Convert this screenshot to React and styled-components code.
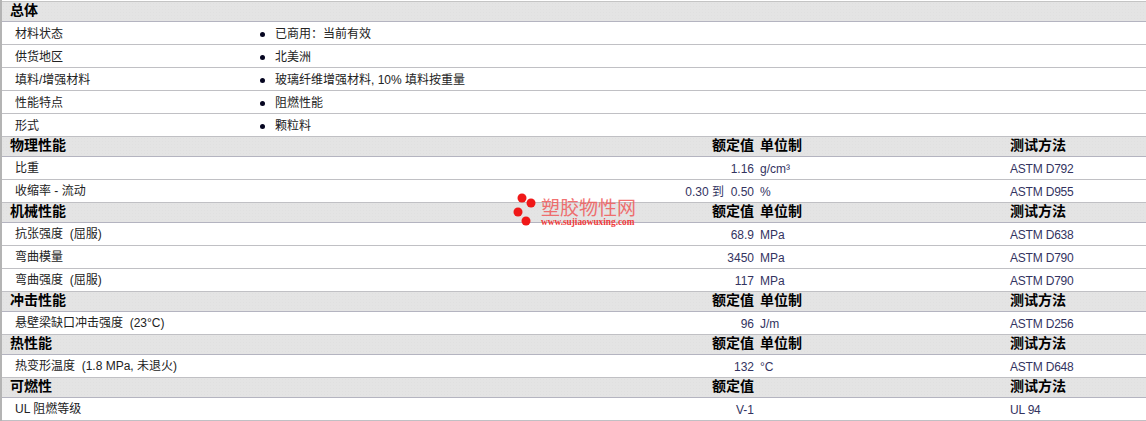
import React from "react";
import styled, { createGlobalStyle } from "styled-components";

const Global = createGlobalStyle`
  html, body { margin: 0; padding: 0; background: #fff; }
  body { font-family: "Liberation Sans", "Noto Sans CJK SC", sans-serif; font-size: 12px; color: #1a1a1a; }
`;
const Page = styled.div`
  position: relative;
  width: 1146px;
  height: 421px;
  overflow: hidden;
  box-sizing: border-box;
  padding-top: 1px;
  border-left: 2px solid #b4b4b4;
`;
const TopRule = styled.div`
  height: 1px;
  background: #c4c4c4;
`;
const Head = styled.div`
  display: grid;
  grid-template-columns: 8px 744px 6px 250px 1fr;
  align-items: start;
  height: 19px;
  border-bottom: 1px solid #b4b4c0;
  background-color: #e4e4e4;
  background-image: radial-gradient(#e0e0e0 0.5px, transparent 0.6px);
  background-size: 3px 3px;
  font-weight: bold;
  font-size: 14px;
  color: #000;
  line-height: 16px;
`;
const Row = styled.div`
  display: grid;
  grid-template-columns: 13px 739px 6px 250px 1fr;
  align-items: center;
  height: 22px;
  border-bottom: 1px solid #c0c0c4;
  line-height: 24px;
  color: #222;
`;
const InfoRow = styled.div`
  display: grid;
  grid-template-columns: 13px 245px 15px 1fr;
  align-items: center;
  height: 22px;
  border-bottom: 1px solid #c0c0c4;
  line-height: 24px;
  color: #222;
`;
const Cell = styled.span`
  white-space: pre;
  grid-column: ${(p) => p.$col};
  color: ${(p) => (p.$tone ? "#33335f" : "inherit")};
`;
const TestCell = styled(Cell)`
  letter-spacing: -0.2px;
`;
const Split = styled.span`
  grid-column: 2;
  display: flex;
  justify-content: space-between;
  white-space: pre;
`;
const Label = styled.span`
  line-height: 22px;
`;
const Value = styled.span`
  color: #33335f;
`;
const Bullet = styled.span`
  grid-column: 3;
  width: 5px;
  height: 5px;
  border-radius: 50%;
  background: #050520;
`;
const Mark = styled.div`
  position: absolute;
  left: 508px;
  top: 192px;
  width: 130px;
  height: 38px;
  pointer-events: none;
  display: flex;
  gap: 4px;
`;
const MarkIcon = styled.svg`
  width: 27px;
  height: 34px;
  flex: none;
`;
const MarkText = styled.div`
  display: flex;
  flex-direction: column;
  color: #f05a5a;
`;
const MarkTitle = styled.div`
  font-size: 19px;
  line-height: 19px;
  margin-top: 7px;
  opacity: .85;
`;
const MarkUrl = styled.div`
  font-family: "Liberation Serif", serif;
  font-size: 9.3px;
  font-weight: bold;
  line-height: 8px;
  color: #f03c3c;
  white-space: nowrap;
`;

const Section = ({ title, unit = "单位制", rows = [] }) => (
  <>
    <Head>
      <Split>
        <span>{title}</span>
        <span>额定值</span>
      </Split>
      {unit && <Cell $col={4}>{unit}</Cell>}
      <Cell $col={5}>测试方法</Cell>
    </Head>
    {rows.map((r) => (
      <Row key={r[0]}>
        <Split>
          <Label>{r[0]}</Label>
          <Value>{r[1]}</Value>
        </Split>
        <Cell $col={4} $tone>{r[2]}</Cell>
        <TestCell $col={5} $tone>{r[3]}</TestCell>
      </Row>
    ))}
  </>
);

const info = [
  ["材料状态", "已商用：当前有效"],
  ["供货地区", "北美洲"],
  ["填料/增强材料", "玻璃纤维增强材料, 10% 填料按重量"],
  ["性能特点", "阻燃性能"],
  ["形式", "颗粒料"],
];

export default function App() {
  return (
    <Page>
      <Global />
      <TopRule />
      <Head>
        <Split><span>总体</span></Split>
      </Head>
      {info.map(([k, v]) => (
        <InfoRow key={k}>
          <Cell $col={2}>{k}</Cell>
          <Bullet />
          <Cell $col={4}>{v}</Cell>
        </InfoRow>
      ))}
      <Section title="物理性能" rows={[
        ["比重", "1.16", "g/cm³", "ASTM D792"],
        ["收缩率 - 流动", "0.30 到  0.50", "%", "ASTM D955"],
      ]} />
      <Section title="机械性能" rows={[
        ["抗张强度  (屈服)", "68.9", "MPa", "ASTM D638"],
        ["弯曲模量", "3450", "MPa", "ASTM D790"],
        ["弯曲强度  (屈服)", "117", "MPa", "ASTM D790"],
      ]} />
      <Section title="冲击性能" rows={[
        ["悬壁梁缺口冲击强度  (23°C)", "96", "J/m", "ASTM D256"],
      ]} />
      <Section title="热性能" rows={[
        ["热变形温度  (1.8 MPa, 未退火)", "132", "°C", "ASTM D648"],
      ]} />
      <Section title="可燃性" unit="" rows={[
        ["UL 阻燃等级", "V-1", "", "UL 94"],
      ]} />
      <Mark>
        <MarkIcon viewBox="0 0 27 34">
          <circle cx="12" cy="6" r="4.5" fill="#f01818" />
          <circle cx="21" cy="11" r="4.5" fill="#f01818" />
          <circle cx="8" cy="20" r="4.5" fill="#f01818" />
          <circle cx="16" cy="29" r="4.5" fill="#f01818" />
        </MarkIcon>
        <MarkText>
          <MarkTitle>塑胶物性网</MarkTitle>
          <MarkUrl>www.sujiaowuxing.com</MarkUrl>
        </MarkText>
      </Mark>
    </Page>
  );
}
